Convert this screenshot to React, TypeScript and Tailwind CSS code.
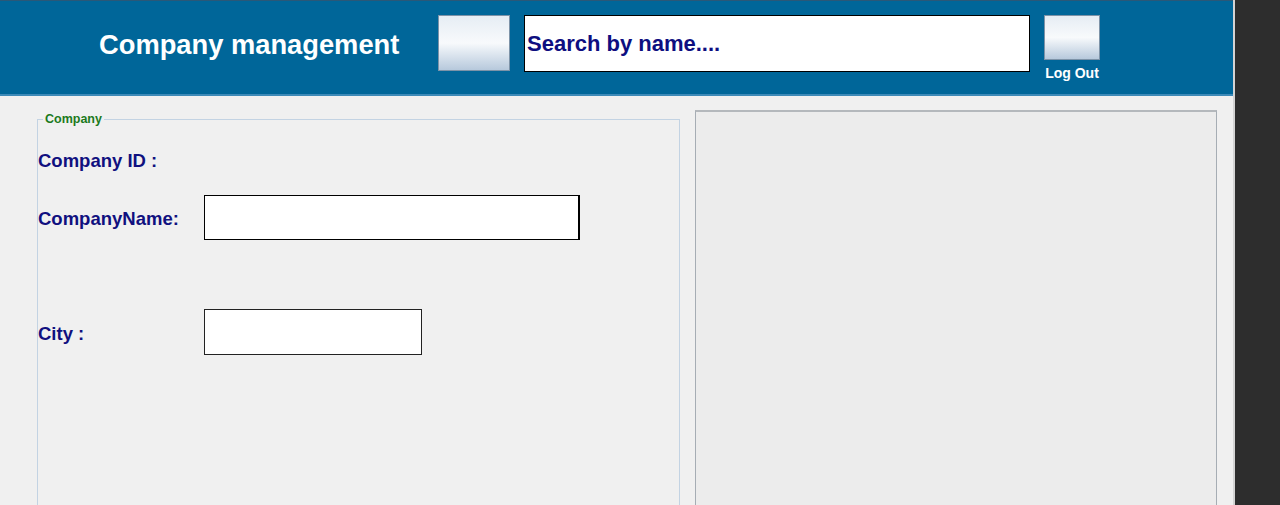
import React from "react";

export default function App() {
  const font = { fontFamily: '"Liberation Sans", Arial, sans-serif' };
  return (
    <div className="flex w-[1280px] h-[505px] overflow-hidden bg-[#2d2d2d]" style={font}>
      <div className="w-[1235px] h-full bg-[#f0f0f0] border-r-2 border-[#d4d4d4] flex flex-col">
        <header className="h-[96px] shrink-0 bg-[#006699] border-t border-[#2a5878] border-b-2 border-b-[#3d8ab8] flex items-start">
          <div className="w-[438px] pl-[99px] pt-[30px]">
            <span className="text-[27.3px] font-bold text-white leading-none">Company management</span>
          </div>
          <button className="mt-[14px] w-[72px] h-[56px] border border-[#7d93a8] bg-gradient-to-b from-[#e6edf4] via-[#f8fafc] to-[#b7c9dc]" />
          <div className="ml-[14px] mt-[14px] w-[506px] h-[57px] bg-white border border-black flex items-center pl-[2px]">
            <span className="text-[22px] font-bold text-[#0e0e80] leading-none">Search by name....</span>
          </div>
          <div className="ml-[14px] mt-[14px] flex flex-col items-center">
            <button className="w-[56px] h-[45px] border border-[#7d93a8] bg-gradient-to-b from-[#e6edf4] via-[#f8fafc] to-[#b7c9dc]" />
            <span className="mt-[6px] text-[14px] font-bold text-white leading-none">Log Out</span>
          </div>
        </header>
        <div className="flex items-start pl-[37px] pt-[16px]">
          <fieldset className="w-[643px] h-[420px] border border-[#c3d3e3] mt-[1px]">
            <legend className="ml-[5px] px-[2px] text-[12.5px] font-bold text-[#1c7a1c] leading-none">Company</legend>
            <div className="flex flex-col text-[18.5px] font-bold text-[#10107f]">
              <div className="h-[30px] flex items-center mt-[20px]">Company ID :</div>
              <div className="flex items-center mt-[19px]">
                <span className="w-[166px] pt-[4px]">CompanyName:</span>
                <div className="w-[376px] h-[45px] bg-white border border-black border-r-2" />
              </div>
              <div className="flex items-center mt-[69px]">
                <span className="w-[166px] pt-[4px]">City :</span>
                <div className="w-[218px] h-[46px] bg-white border border-[#222]" />
              </div>
            </div>
          </fieldset>
          <div className="ml-[15px] mt-[-2px] w-[522px] h-[420px] bg-[#ececec] border border-[#a6adb4] border-t-2 border-t-[#b4b8bc]" />
        </div>
      </div>
    </div>
  );
}
